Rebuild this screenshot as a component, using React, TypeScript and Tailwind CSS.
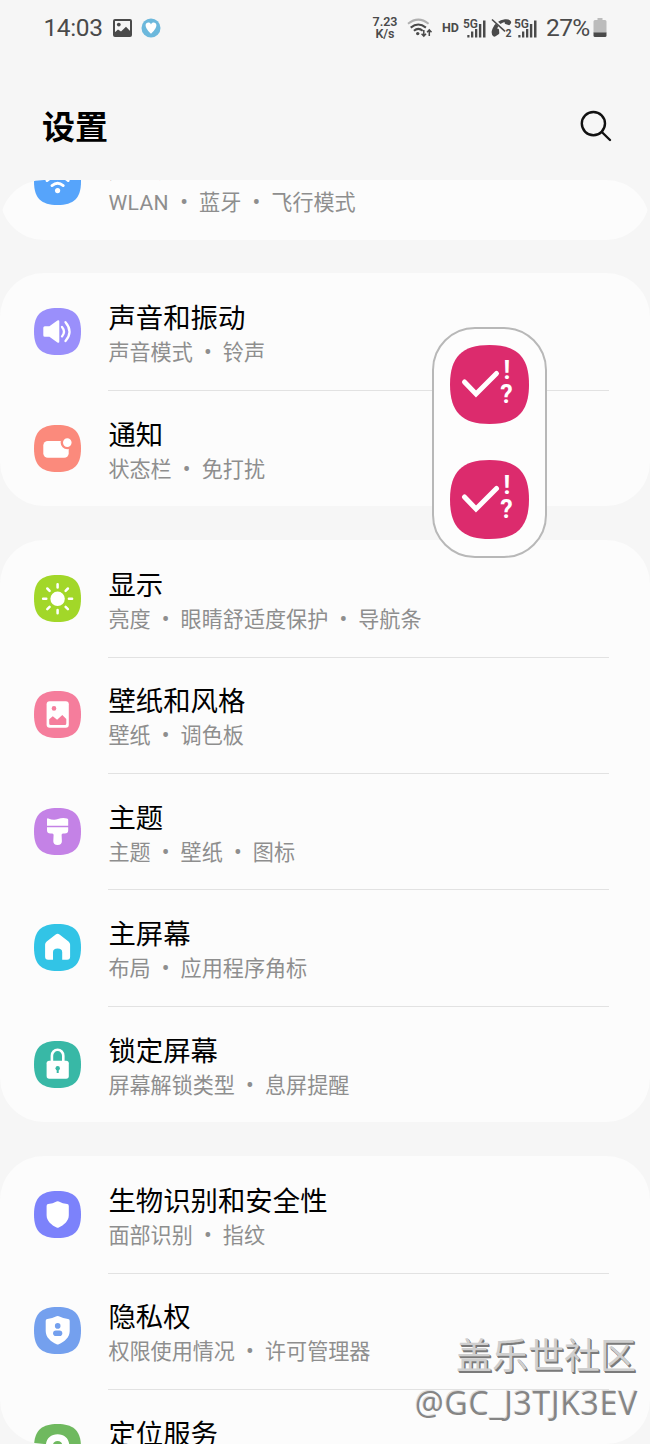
import { Fragment } from 'react';
import type { ReactNode } from 'react';

type Item = {
  title: string;
  tags: string[];
  color: string;
  glyph: ReactNode;
};

const SQUIRCLE = 'M23.5 0C40 0 47 7 47 23.5S40 47 23.5 47 0 40 0 23.5 7 0 23.5 0Z';

const connections: Item = {
  title: '连接',
  tags: ['WLAN', '蓝牙', '飞行模式'],
  color: '#56a4fb',
  glyph: (
    <>
      <circle cx="23.6" cy="32.6" r="2.6" fill="#fff" />
      <path d="M18 27.6q5.6-4.6 11.2 0M13 22.6q10.6-8.8 21.2 0" fill="none" stroke="#fff" strokeWidth="2.8" strokeLinecap="round" />
    </>
  )
};

const soundGroup: Item[] = [
  {
    title: '声音和振动',
    tags: ['声音模式', '铃声'],
    color: '#9a8ffb',
    glyph: (
      <>
        <path d="M10.8 18.2h4.6l8-5.6q1.9-1.1 1.9 1v19.8q0 2.1-1.9 1l-8-5.6h-4.6q-1.5 0-1.5-1.5v-7.6q0-1.5 1.5-1.5Z" fill="#fff" />
        <path d="M28 19q4 4.7 0 9.4M31.5 14.2q8 9.4 0 18.8" fill="none" stroke="#fff" strokeWidth="2.3" strokeLinecap="round" />
      </>
    )
  },
  {
    title: '通知',
    tags: ['状态栏', '免打扰'],
    color: '#fb8a7c',
    glyph: (
      <>
        <rect x="9.3" y="16" width="25.4" height="16.7" rx="4.5" fill="#fff" />
        <circle cx="33.3" cy="17.6" r="5.5" fill="#fff" stroke="#fb8a7c" strokeWidth="2.4" />
      </>
    )
  }
];

const displayGroup: Item[] = [
  {
    title: '显示',
    tags: ['亮度', '眼睛舒适度保护', '导航条'],
    color: '#a2d729',
    glyph: (
      <>
        <circle cx="23.6" cy="23.8" r="7.2" fill="#fff" />
        <path
          d="M23.6 9.3v3.2M23.6 35.1v3.2M9.1 23.8h3.2M34.9 23.8h3.2M13.3 13.5l2.3 2.3M31.6 31.8l2.3 2.3M33.9 13.5l-2.3 2.3M15.6 31.8l-2.3 2.3"
          stroke="#fff"
          strokeWidth="2.5"
          strokeLinecap="round"
        />
      </>
    )
  },
  {
    title: '壁纸和风格',
    tags: ['壁纸', '调色板'],
    color: '#f57d9c',
    glyph: (
      <>
        <rect x="12.6" y="10.3" width="22.2" height="26.5" rx="3" fill="#fff" />
        <circle cx="20" cy="17.4" r="2.3" fill="#f57d9c" />
        <path d="M15.2 28.2l3.6-3 4.3 3.6 5.2-4.8 4 4v4.6q0 1.5-1.5 1.5h-14.1q-1.5 0-1.5-1.5Z" fill="#f57d9c" />
      </>
    )
  },
  {
    title: '主题',
    tags: ['主题', '壁纸', '图标'],
    color: '#c482e6',
    glyph: (
      <>
        <path d="M13 11.3q0-1.2 1.3-.9 5.2 2.2 9.7.6t9-.5q1.2.2 1.2 1.3v5.9H13Z" fill="#fff" />
        <path d="M13 19.3h21.2v2.9q0 3.2-3.5 3.2h-1.7q-1.5 0-1.4 1.5l.3 6.4q0 3.7-4.3 3.7t-4.3-3.7l.3-6.4q.1-1.5-1.4-1.5h-1.7q-3.5 0-3.5-3.2Z" fill="#fff" />
      </>
    )
  },
  {
    title: '主屏幕',
    tags: ['布局', '应用程序角标'],
    color: '#32c4e6',
    glyph: (
      <path
        d="M21.7 10.4q1.900-1.400 3.800 0l9 7q1.600 1.300 1.600 3.200v12.200q0 3-3 3h-4.900v-7.600q0-3.600-4.600-3.600t-4.600 3.600v7.600h-4.900q-3 0-3-3V20.600q0-1.900 1.600-3.200Z"
        fill="#fff"
      />
    )
  },
  {
    title: '锁定屏幕',
    tags: ['屏幕解锁类型', '息屏提醒'],
    color: '#38b8a6',
    glyph: (
      <>
        <path d="M17.900 21v-6.300a5.700 5.900 0 0 1 11.400 0V21" fill="none" stroke="#fff" strokeWidth="2.6" />
        <rect x="12.6" y="19.7" width="22.2" height="18" rx="2.6" fill="#fff" />
        <circle cx="23.7" cy="27.2" r="2.2" fill="#38b8a6" />
        <path d="M23.700 27v5" stroke="#38b8a6" strokeWidth="2" />
      </>
    )
  }
];

const securityGroup: Item[] = [
  {
    title: '生物识别和安全性',
    tags: ['面部识别', '指纹'],
    color: '#7c82fb',
    glyph: (
      <path d="M22.600 10.500q1.100-.6 2.200 0 3.800 2.200 8.400 2.600 1.600.2 1.600 1.800v9.300c0 6-5 9.800-10 12.200q-1.100.5-2.200 0c-5-2.400-10-6.200-10-12.200v-9.300q0-1.600 1.600-1.800 4.600-.4 8.400-2.600Z" fill="#fff" />
    )
  },
  {
    title: '隐私权',
    tags: ['权限使用情况', '许可管理器'],
    color: '#74a0ee',
    glyph: (
      <>
        <path d="M22.600 9.200q1.100-.5 2.200 0 4.300 2.300 9.200 2.700 1.700.2 1.700 1.900v10.200c0 6.500-5.400 10.700-10.900 13.300q-1.100.5-2.200 0c-5.500-2.600-10.900-6.800-10.900-13.300V13.800q0-1.700 1.700-1.900 4.900-.4 9.200-2.700Z" fill="#fff" />
        <circle cx="23.7" cy="18.9" r="2.8" fill="#74a0ee" />
        <rect x="19.1" y="23.5" width="9.2" height="5.6" rx="2.8" fill="#74a0ee" />
      </>
    )
  },
  {
    title: '定位服务',
    tags: ['位置信息请求'],
    color: '#6fb95f',
    glyph: (
      <>
        <path d="M23.600 10.300c7 0 11.700 4.700 11.700 11.300 0 7.200-6.200 12.400-11.700 17.100-5.500-4.700-11.700-9.900-11.700-17.100 0-6.600 4.700-11.300 11.700-11.300Z" fill="#fff" />
        <circle cx="23.6" cy="21.7" r="4.8" fill="#6fb95f" />
      </>
    )
  }
];

export default function App() {
  return (
    <div className="relative flex h-[1444px] w-[650px] flex-col overflow-hidden bg-[#f6f6f6] font-['Roboto','Noto_Sans_CJK_SC',sans-serif]">
      <StatusBar />
      <header className="flex h-[126px] items-center justify-between pt-[22px] pr-[37px] pl-[42px]">
        <h1 className="text-[33px] font-bold text-black">设置</h1>
        <svg width="34" height="34" viewBox="0 0 34 34" fill="none" stroke="#111" strokeWidth="2.4" strokeLinecap="round" className="-mt-1">
          <circle cx="14.4" cy="14.6" r="11.6" />
          <path d="M22.800 23l8.200 8" />
        </svg>
      </header>
      <main className="h-[1264px] overflow-hidden rounded-[44px]">
        <div className="-mt-[56.8px] flex flex-col gap-[33.8px]">
          <Group items={[connections]} />
          <Group items={soundGroup} />
          <Group items={displayGroup} />
          <Group items={securityGroup} />
        </div>
      </main>
      <EdgePanel />
      <Watermark />
    </div>
  );
}

function Group({ items }: { items: Item[] }) {
  return (
    <section className="rounded-[44px] bg-[#fcfcfc]">
      {items.map((item, i) => (
        <div key={item.title} className="flex h-[116.45px] items-center pl-[34px]">
          <svg width="47" height="47" viewBox="0 0 47 47" className="shrink-0">
            <path d={SQUIRCLE} fill={item.color} />
            {item.glyph}
          </svg>
          <div className={`ml-[27.4px] flex h-[117.5px] w-[501px] shrink-0 flex-col self-start pt-[28.8px] ${i < items.length - 1 ? 'border-b border-[#e2e2e2]' : ''}`}>
            <p className="text-[27.4px] leading-[35px] whitespace-nowrap text-black">{item.title}</p>
            <p className="flex text-[21.1px] leading-8 whitespace-nowrap text-[#8e8e8e]">
              {item.tags.map((tag, n) => (
                <Fragment key={tag}>
                  {n > 0 && <span className="w-[30px] text-center text-[23px]">•</span>}
                  <span className={tag === 'WLAN' ? 'tracking-[0.4px]' : ''}>{tag}</span>
                </Fragment>
              ))}
            </p>
          </div>
        </div>
      ))}
    </section>
  );
}

function StatusBar() {
  return (
    <div className="flex h-[54px] items-center pt-0.5 pl-[43.5px] text-[#4a4a4a]">
      <span className="w-[69.5px] text-[24.5px] leading-none tracking-[-0.4px]">14:03</span>
      <svg width="19" height="18" viewBox="0 0 19 18">
        <rect x="1" y="1" width="17" height="16" rx="1" fill="none" stroke="#4a4a4a" strokeWidth="2" />
        <circle cx="5.8" cy="5.6" r="1.9" fill="#4a4a4a" />
        <path d="M1 14l4-3.500 3 2 5-4.800 5 5.300v4H1Z" fill="#4a4a4a" />
      </svg>
      <svg width="20" height="20" viewBox="0 0 20 20" className="ml-[9px]">
        <circle cx="10" cy="10" r="9.5" fill="#6cb8dc" />
        <path d="M10 15.700C7.300 13.600 4.600 9.800 4.600 7.300c0-3.200 4.300-3.800 5.400-.9 1.100-2.900 5.400-2.300 5.400.9 0 2.500-2.700 6.300-5.400 8.400Z" fill="#fff" />
      </svg>
      <div className="ml-[211px] w-[26px] text-center text-[12.5px] leading-[12px] font-semibold">
        <div>7.23</div>
        <div>K/s</div>
      </div>
      <svg width="27" height="21" viewBox="0 0 27 21" fill="none" stroke="#4a4a4a" className="ml-[9px]">
        <path d="M1 5.800q10.300-8.400 20.600 0" stroke="#b0b0b0" strokeWidth="2" />
        <path d="M3.700 9.600q7.600-6.100 15.200 0M6.900 12.700q4.400-3.600 8.800 0" strokeWidth="2" />
        <circle cx="10.7" cy="15.6" r="1.7" fill="#4a4a4a" stroke="none" />
        <path d="M16.800 12v6M14.600 15.800l2.200 2.400 2.200-2.400M22.300 18v-6M20.100 14.200l2.200-2.400 2.200 2.400" strokeWidth="1.5" />
      </svg>
      <span className="ml-2 w-[21px] text-[12.5px] leading-none font-bold">HD</span>
      <Signal />
      <svg width="21" height="20" viewBox="0 0 21 20" className="ml-[5px] overflow-visible">
        <path d="M2.300 18.300Q-.6 15.500 1.600 10.500 5 2.500 14 1.300q4.600-.4 6 2.200.4 1-.2 2l-1 1.300q-.5.600-1.300.2l-3.100-1.100q-.8-.4-.8-1.200l0-.8Q8.300 5.200 6.100 10.500l1 .2q.8.200.9 1l.3 3.300q0 .8-.7 1.300l-3 2q-1.300.8-2.300 0Z" fill="#4a4a4a" />
        <path d="M1.800 .8L15 13" stroke="#f6f6f6" strokeWidth="3" />
        <path d="M1 1.500L14 13.300" stroke="#4a4a4a" strokeWidth="1.6" />
        <text x="14.6" y="18.8" fontSize="10.5" fontWeight="700" fill="#4a4a4a">2</text>
      </svg>
      <div className="ml-0.5">
        <Signal />
      </div>
      <span className="ml-[9px] w-[47px] text-[24.5px] leading-none tracking-[-0.6px]">27%</span>
      <svg width="14" height="20" viewBox="0 0 14 20">
        <path d="M4.500 0h5v2H12q1.500 0 1.500 1.500V15H.5V3.500Q.5 2 2 2h2.500Z" fill="#bcbcbc" />
        <path d="M.5 14.500h13v3q0 1.500-1.500 1.500H2Q.5 19 .5 17.500Z" fill="#4a4a4a" />
      </svg>
    </div>
  );
}

function Signal() {
  return (
    <svg width="23" height="20" viewBox="0 0 23 20" fill="#4a4a4a">
      <text x="0" y="9.5" fontSize="12" fontWeight="600" textLength="15" lengthAdjust="spacingAndGlyphs">5G</text>
      <path d="M4.300 17h2.200v2.500H4.300ZM8 13.500h2.300v6H8ZM12 11h2.300v8.500H12ZM15.900 6h2.400v13.500h-2.400ZM20 2.500h2.500v17H20Z" />
    </svg>
  );
}

function EdgePanel() {
  return (
    <aside className="absolute top-[326.5px] left-[432px] flex h-[231px] w-[115px] flex-col items-center gap-9 rounded-[43px] border-2 border-[#b8b8b8] bg-[#fdfdfd] pt-[16.5px]">
      <QuizIcon />
      <QuizIcon />
    </aside>
  );
}

function QuizIcon() {
  return (
    <svg width="79" height="79" viewBox="0 0 79 79" className="shrink-0">
      <path d="M39.500 0C67 0 79 12 79 39.500S67 79 39.500 79 0 67 0 39.500 12 0 39.500 0Z" fill="#dc2b6d" />
      <path d="M14.500 37L26 49l20.500-20.500" fill="none" stroke="#fff" strokeWidth="5" strokeLinecap="round" />
      <text x="57" y="34" textAnchor="middle" fontSize="25" fontWeight="700" fill="#fff">!</text>
      <text x="56.5" y="58" textAnchor="middle" fontSize="25" fontWeight="700" fill="#fff">?</text>
    </svg>
  );
}

function Watermark() {
  return (
    <div className="absolute right-[13px] bottom-[18px] flex flex-col items-end whitespace-nowrap">
      <span className="mr-px text-[36px] leading-[46px] text-[#cfcfcf] [text-shadow:1px_1px_0_#7a7a7a,1.5px_1.5px_0_#7a7a7a]">盖乐世社区</span>
      <span className="-mr-px font-['Open_Sans',sans-serif] text-[32px] leading-[46px] tracking-[0.75px] text-[#858585] [text-shadow:-1px_-1px_0_#dcdcdc]">@GC_J3TJK3EV</span>
    </div>
  );
}
